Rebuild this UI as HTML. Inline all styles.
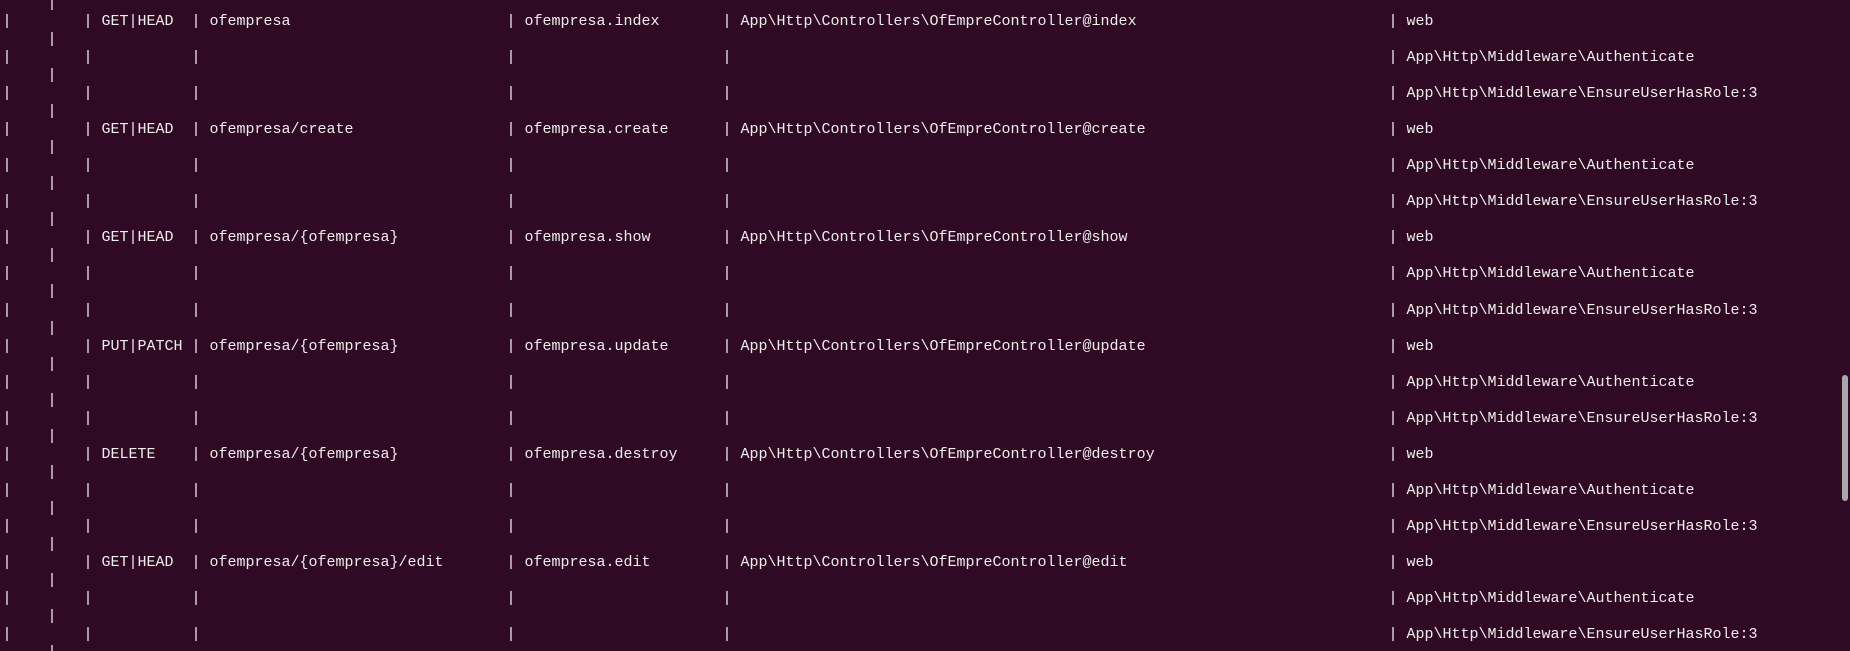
<!DOCTYPE html>
<html><head><meta charset="utf-8"><style>
html,body{margin:0;padding:0;background:#300a24;width:1850px;height:651px;overflow:hidden}
body{position:relative;font-family:"Liberation Mono",monospace;font-size:15px;color:#eeeeec}
.l{position:absolute;left:0;height:18px;line-height:18px;width:1850px;white-space:pre}
.l span{position:absolute;top:0}
.a{left:2.5px}.b{left:83.5px}.c{left:191.5px}.d{left:506.5px}.e{left:722.5px}.f{left:1388.5px}
.w{left:47.5px}.m{left:101.5px}.u{left:209.5px}.n{left:524.5px}.t{left:740.5px}.g{left:1406.5px}
#sb{position:absolute;left:1842px;top:375px;width:6px;height:126px;background:#a8a8a8;border-radius:3px}
</style></head><body>
<div class="l" style="top:-5px"><span class="w">|</span></div>
<div class="l" style="top:13.03px"><span class="a">|</span><span class="b">|</span><span class="c">|</span><span class="d">|</span><span class="e">|</span><span class="f">|</span><span class="m">GET|HEAD</span><span class="u">ofempresa</span><span class="n">ofempresa.index</span><span class="t">App\Http\Controllers\OfEmpreController@index</span><span class="g">web</span></div>
<div class="l" style="top:31.06px"><span class="w">|</span></div>
<div class="l" style="top:49.09px"><span class="a">|</span><span class="b">|</span><span class="c">|</span><span class="d">|</span><span class="e">|</span><span class="f">|</span><span class="g">App\Http\Middleware\Authenticate</span></div>
<div class="l" style="top:67.12px"><span class="w">|</span></div>
<div class="l" style="top:85.15px"><span class="a">|</span><span class="b">|</span><span class="c">|</span><span class="d">|</span><span class="e">|</span><span class="f">|</span><span class="g">App\Http\Middleware\EnsureUserHasRole:3</span></div>
<div class="l" style="top:103.18px"><span class="w">|</span></div>
<div class="l" style="top:121.21px"><span class="a">|</span><span class="b">|</span><span class="c">|</span><span class="d">|</span><span class="e">|</span><span class="f">|</span><span class="m">GET|HEAD</span><span class="u">ofempresa/create</span><span class="n">ofempresa.create</span><span class="t">App\Http\Controllers\OfEmpreController@create</span><span class="g">web</span></div>
<div class="l" style="top:139.24px"><span class="w">|</span></div>
<div class="l" style="top:157.27px"><span class="a">|</span><span class="b">|</span><span class="c">|</span><span class="d">|</span><span class="e">|</span><span class="f">|</span><span class="g">App\Http\Middleware\Authenticate</span></div>
<div class="l" style="top:175.3px"><span class="w">|</span></div>
<div class="l" style="top:193.33px"><span class="a">|</span><span class="b">|</span><span class="c">|</span><span class="d">|</span><span class="e">|</span><span class="f">|</span><span class="g">App\Http\Middleware\EnsureUserHasRole:3</span></div>
<div class="l" style="top:211.36px"><span class="w">|</span></div>
<div class="l" style="top:229.39px"><span class="a">|</span><span class="b">|</span><span class="c">|</span><span class="d">|</span><span class="e">|</span><span class="f">|</span><span class="m">GET|HEAD</span><span class="u">ofempresa/{ofempresa}</span><span class="n">ofempresa.show</span><span class="t">App\Http\Controllers\OfEmpreController@show</span><span class="g">web</span></div>
<div class="l" style="top:247.42px"><span class="w">|</span></div>
<div class="l" style="top:265.45px"><span class="a">|</span><span class="b">|</span><span class="c">|</span><span class="d">|</span><span class="e">|</span><span class="f">|</span><span class="g">App\Http\Middleware\Authenticate</span></div>
<div class="l" style="top:283.48px"><span class="w">|</span></div>
<div class="l" style="top:301.51px"><span class="a">|</span><span class="b">|</span><span class="c">|</span><span class="d">|</span><span class="e">|</span><span class="f">|</span><span class="g">App\Http\Middleware\EnsureUserHasRole:3</span></div>
<div class="l" style="top:319.54px"><span class="w">|</span></div>
<div class="l" style="top:337.57px"><span class="a">|</span><span class="b">|</span><span class="c">|</span><span class="d">|</span><span class="e">|</span><span class="f">|</span><span class="m">PUT|PATCH</span><span class="u">ofempresa/{ofempresa}</span><span class="n">ofempresa.update</span><span class="t">App\Http\Controllers\OfEmpreController@update</span><span class="g">web</span></div>
<div class="l" style="top:355.6px"><span class="w">|</span></div>
<div class="l" style="top:373.63px"><span class="a">|</span><span class="b">|</span><span class="c">|</span><span class="d">|</span><span class="e">|</span><span class="f">|</span><span class="g">App\Http\Middleware\Authenticate</span></div>
<div class="l" style="top:391.66px"><span class="w">|</span></div>
<div class="l" style="top:409.69px"><span class="a">|</span><span class="b">|</span><span class="c">|</span><span class="d">|</span><span class="e">|</span><span class="f">|</span><span class="g">App\Http\Middleware\EnsureUserHasRole:3</span></div>
<div class="l" style="top:427.72px"><span class="w">|</span></div>
<div class="l" style="top:445.75px"><span class="a">|</span><span class="b">|</span><span class="c">|</span><span class="d">|</span><span class="e">|</span><span class="f">|</span><span class="m">DELETE</span><span class="u">ofempresa/{ofempresa}</span><span class="n">ofempresa.destroy</span><span class="t">App\Http\Controllers\OfEmpreController@destroy</span><span class="g">web</span></div>
<div class="l" style="top:463.78px"><span class="w">|</span></div>
<div class="l" style="top:481.81px"><span class="a">|</span><span class="b">|</span><span class="c">|</span><span class="d">|</span><span class="e">|</span><span class="f">|</span><span class="g">App\Http\Middleware\Authenticate</span></div>
<div class="l" style="top:499.84px"><span class="w">|</span></div>
<div class="l" style="top:517.87px"><span class="a">|</span><span class="b">|</span><span class="c">|</span><span class="d">|</span><span class="e">|</span><span class="f">|</span><span class="g">App\Http\Middleware\EnsureUserHasRole:3</span></div>
<div class="l" style="top:535.9px"><span class="w">|</span></div>
<div class="l" style="top:553.93px"><span class="a">|</span><span class="b">|</span><span class="c">|</span><span class="d">|</span><span class="e">|</span><span class="f">|</span><span class="m">GET|HEAD</span><span class="u">ofempresa/{ofempresa}/edit</span><span class="n">ofempresa.edit</span><span class="t">App\Http\Controllers\OfEmpreController@edit</span><span class="g">web</span></div>
<div class="l" style="top:571.96px"><span class="w">|</span></div>
<div class="l" style="top:589.99px"><span class="a">|</span><span class="b">|</span><span class="c">|</span><span class="d">|</span><span class="e">|</span><span class="f">|</span><span class="g">App\Http\Middleware\Authenticate</span></div>
<div class="l" style="top:608.02px"><span class="w">|</span></div>
<div class="l" style="top:626.05px"><span class="a">|</span><span class="b">|</span><span class="c">|</span><span class="d">|</span><span class="e">|</span><span class="f">|</span><span class="g">App\Http\Middleware\EnsureUserHasRole:3</span></div>
<div class="l" style="top:644.08px"><span class="w">|</span></div>
<div id="sb"></div>
</body></html>
